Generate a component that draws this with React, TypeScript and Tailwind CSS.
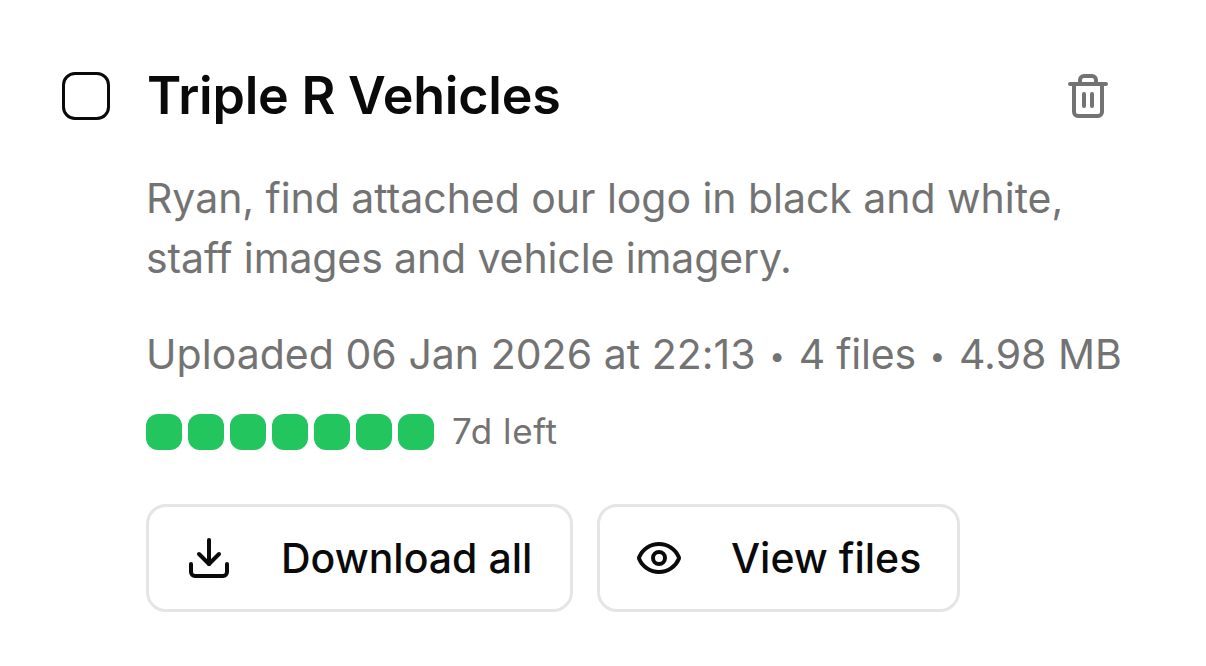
import React, { useState } from 'react';
import { Download, Eye, Trash2 } from 'lucide-react';

const DAYS_LEFT = 7;

const Dot = () => (
  <span className="inline-block w-5 text-center align-[3px] text-[28px] leading-none tracking-normal">•</span>
);

export default function App() {
  const [selected, setSelected] = useState(false);

  return (
    <div className="flex h-[666px] w-[1206px] gap-9 overflow-hidden bg-white pt-[60px] pl-[62px] font-['Inter',sans-serif] text-neutral-950">
      <button
        role="checkbox"
        aria-checked={selected}
        aria-label="Select upload"
        onClick={() => setSelected(!selected)}
        className={`mt-3 h-12 w-12 shrink-0 rounded-[13px] border-3 border-neutral-950 ${selected ? 'bg-neutral-950' : 'bg-white'}`}
      />

      <div className="flex w-[1000px] shrink-0 flex-col">
        {/* Title */}
        <div className="flex h-[72px] items-center justify-between pr-[34px]">
          <h2 className="whitespace-nowrap pl-px text-[52px] leading-[72px] font-semibold tracking-[-0.22px]">Triple R Vehicles</h2>
          <button aria-label="Delete upload" className="text-[#737373]">
            <Trash2 size={48} />
          </button>
        </div>

        <p className="mt-9 whitespace-nowrap text-[41px] leading-[60px] tracking-[-0.04px] text-[#737373]">
          Ryan, find attached our logo in black and white,
          <br />
          <span className="tracking-[-0.12px]">staff images and vehicle imagery.</span>
        </p>

        <p className="mt-9 h-[60px] whitespace-nowrap text-[41px] leading-[60px] text-[#737373]">
          <span className="tracking-[0.03px]">Uploaded 06 Jan 2026 at 22:13</span> <Dot />{' '}
          <span className="tracking-[-0.2px]">4 files</span> <Dot /> 4.98 MB
        </p>

        {/* Days remaining */}
        <div className="mt-[30px] flex h-9 items-center gap-1.5">
          {Array.from({ length: DAYS_LEFT }, (_, i) => (
            <span key={i} className="h-9 w-9 rounded-xl bg-[#22c55e]" />
          ))}
          <span className="ml-3 whitespace-nowrap pb-0.5 text-[35px] leading-[34px] tracking-[0.6px] text-[#737373]">{DAYS_LEFT}d left</span>
        </div>

        {/* Actions */}
        <div className="mt-[54px] flex gap-6">
          <button className="flex h-[108px] w-[427px] items-center gap-12 rounded-[20px] border-3 border-neutral-200 pl-9">
            <Download size={48} className="shrink-0" />
            <span className="whitespace-nowrap text-[41px] leading-[60px] font-medium">Download all</span>
          </button>
          <button className="flex h-[108px] w-[363px] items-center gap-12 rounded-[20px] border-3 border-neutral-200 pl-[35px]">
            <Eye size={48} className="shrink-0" />
            <span className="whitespace-nowrap text-[41px] leading-[60px] font-medium">View files</span>
          </button>
        </div>
      </div>
    </div>
  );
}
